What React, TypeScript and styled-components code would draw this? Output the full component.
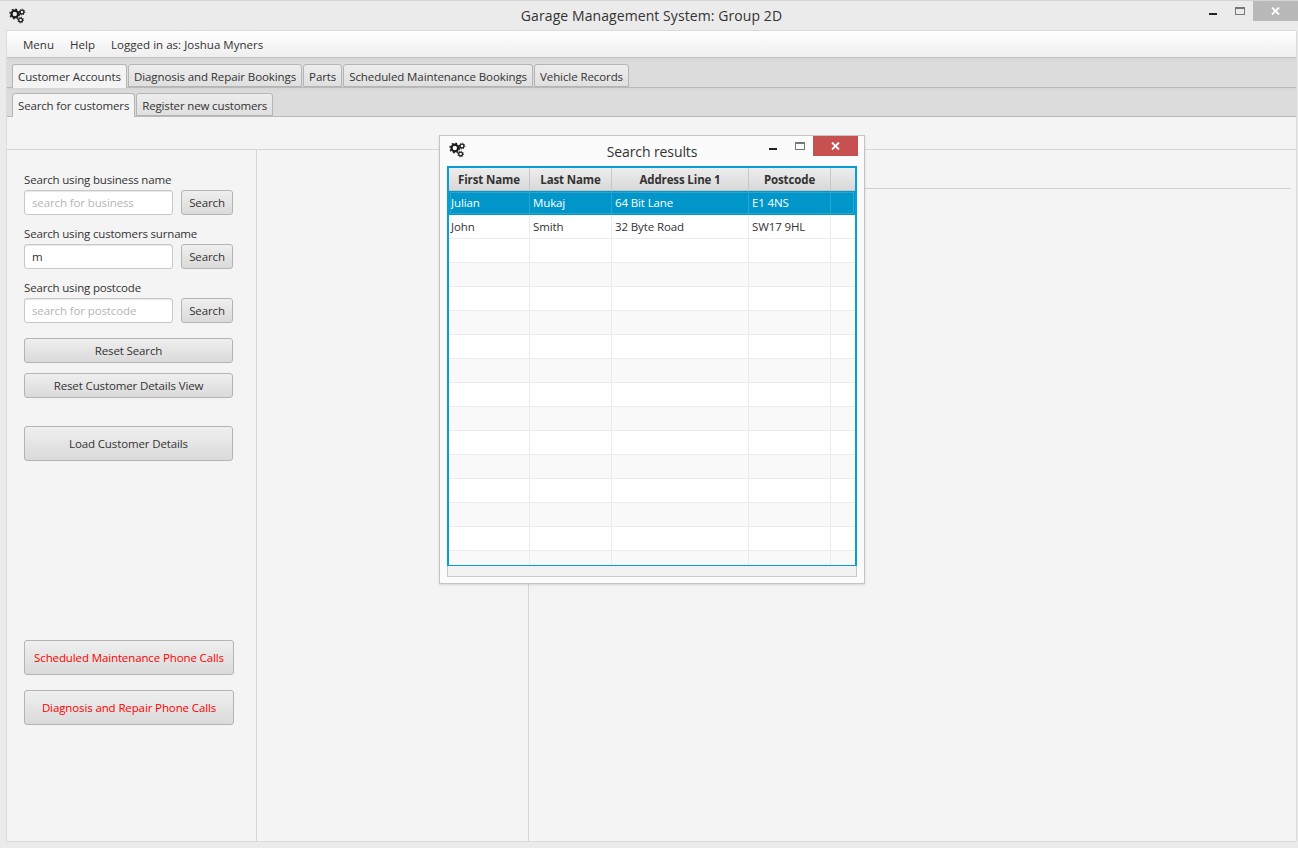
import React from "react";
import styled, { createGlobalStyle } from "styled-components";

const GlobalStyle = createGlobalStyle`
  html, body {
    margin: 0;
    padding: 0;
    background: #ebebeb;
  }
  * {
    box-sizing: border-box;
  }
`;

const FONT = `"Open Sans", "Noto Sans", sans-serif`;

const GearsIcon = () => (
  <svg width="17" height="16" viewBox="0 0 17 16" fill="none">
    <circle cx="5.8" cy="6" r="3.3" stroke="#1a1a1a" strokeWidth="2.2" />
    <circle cx="5.8" cy="6" r="4.8" stroke="#1a1a1a" strokeWidth="1.4" strokeDasharray="1.8 1.97" />
    <circle cx="13" cy="4" r="1.9" stroke="#1a1a1a" strokeWidth="1.3" />
    <circle cx="13" cy="4" r="2.9" stroke="#1a1a1a" strokeWidth="0.9" strokeDasharray="1.1 1.18" />
    <circle cx="11.6" cy="12" r="1.9" stroke="#1a1a1a" strokeWidth="1.3" />
    <circle cx="11.6" cy="12" r="2.9" stroke="#1a1a1a" strokeWidth="0.9" strokeDasharray="1.1 1.18" />
  </svg>
);

const MaximiseIcon = () => (
  <svg width="10" height="8" viewBox="0 0 10 8" fill="none">
    <rect x="0.5" y="0.5" width="9" height="7" stroke="#777" />
    <rect x="0" y="0" width="10" height="2" fill="#777" />
  </svg>
);

const CloseIcon = () => (
  <svg width="9" height="8" viewBox="0 0 9 8" fill="none">
    <path d="M1 0.5L8 7.5M8 0.5L1 7.5" stroke="#fff" strokeWidth="1.8" />
  </svg>
);

const Minimise = styled.span`
  display: block;
  width: 8px;
  height: 2px;
  background: #222;
`;

const WindowControls = ({ active }: { active?: boolean }) => (
  <Controls>
    <MinButton>
      <Minimise />
    </MinButton>
    <MaxButton>
      <MaximiseIcon />
    </MaxButton>
    <CloseButton $active={active}>
      <CloseIcon />
    </CloseButton>
  </Controls>
);

const columns = ["First Name", "Last Name", "Address Line 1", "Postcode", ""];
const customers = [
  ["Julian", "Mukaj", "64 Bit Lane", "E1 4NS", ""],
  ["John", "Smith", "32 Byte Road", "SW17 9HL", ""],
];
const emptyRows = Array.from({ length: 14 }, (_, i) => i);

const App = () => {
  return (
    <Page>
      <GlobalStyle />
      <TitleBar>
        <TitleIcon>
          <GearsIcon />
        </TitleIcon>
        <Title>Garage Management System: Group 2D</Title>
        <WindowControls />
      </TitleBar>
      <Frame>
        <MenuBar>
          <MenuItem>Menu</MenuItem>
          <MenuItem>Help</MenuItem>
          <MenuItem>Logged in as: Joshua Myners</MenuItem>
        </MenuBar>
        <TabStrip $main>
          <Tab $active>Customer Accounts</Tab>
          <Tab>Diagnosis and Repair Bookings</Tab>
          <Tab>Parts</Tab>
          <Tab>Scheduled Maintenance Bookings</Tab>
          <Tab>Vehicle Records</Tab>
        </TabStrip>
        <TabStrip>
          <Tab $active>Search for customers</Tab>
          <Tab>Register new customers</Tab>
        </TabStrip>
        <TopBand />
        <Columns>
          <SearchPanel>
            <SearchGroup>
              <FieldLabel>Search using business name</FieldLabel>
              <FieldRow>
                <TextField placeholder="search for business" readOnly />
                <SmallButton>Search</SmallButton>
              </FieldRow>
            </SearchGroup>
            <SearchGroup>
              <FieldLabel>Search using customers surname</FieldLabel>
              <FieldRow>
                <TextField value="m" readOnly />
                <SmallButton>Search</SmallButton>
              </FieldRow>
            </SearchGroup>
            <SearchGroup>
              <FieldLabel>Search using postcode</FieldLabel>
              <FieldRow>
                <TextField placeholder="search for postcode" readOnly />
                <SmallButton>Search</SmallButton>
              </FieldRow>
            </SearchGroup>
            <WideButton>Reset Search</WideButton>
            <WideButton>Reset Customer Details View</WideButton>
            <LoadButton>Load Customer Details</LoadButton>
            <PhoneButton>Scheduled Maintenance Phone Calls</PhoneButton>
            <PhoneButton>Diagnosis and Repair Phone Calls</PhoneButton>
          </SearchPanel>
          <MiddlePanel />
          <DetailPanel>
            <DetailRule />
          </DetailPanel>
        </Columns>
      </Frame>

      <Dialog>
        <DialogTitleBar>
          <DialogIcon>
            <GearsIcon />
          </DialogIcon>
          <DialogTitle>Search results</DialogTitle>
          <WindowControls active />
        </DialogTitleBar>
        <TableFrame>
          <HeaderRow>
            {columns.map((c, i) => (
              <HeaderCell key={i}>{c}</HeaderCell>
            ))}
          </HeaderRow>
          {customers.map((row, r) => (
            <Row key={r} $selected={r === 0}>
              {row.map((v, i) => (
                <Cell key={i} $selected={r === 0}>
                  {v}
                </Cell>
              ))}
            </Row>
          ))}
          {emptyRows.map((r) => (
            <Row key={r} $odd={r % 2 === 1}>
              {columns.map((_, i) => (
                <Cell key={i} />
              ))}
            </Row>
          ))}
        </TableFrame>
        <ScrollTrack />
      </Dialog>
    </Page>
  );
};

export default App;

const Page = styled.div`
  position: relative;
  width: 1298px;
  height: 848px;
  overflow: hidden;
  display: flex;
  flex-direction: column;
  background: #ebebeb;
  border-top: 1px solid #d4d4d4;
  font-family: ${FONT};
  font-size: 11.5px;
  letter-spacing: -0.12px;
  color: #333;
`;

const TitleBar = styled.div`
  position: relative;
  height: 29px;
  flex: none;
  display: flex;
  align-items: center;
  justify-content: center;
  padding-left: 5px;
`;

const TitleIcon = styled.div`
  position: absolute;
  left: 9px;
  top: 7px;
  display: flex;
`;

const Title = styled.div`
  font-size: 14px;
  letter-spacing: 0.08px;
  color: #333;
`;

const Controls = styled.div`
  position: absolute;
  top: 0;
  right: 0;
  display: flex;
  align-items: flex-start;
`;

const MinButton = styled.div`
  width: 28px;
  height: 20px;
  display: flex;
  align-items: flex-start;
  justify-content: center;
  padding-top: 12px;
`;

const MaxButton = styled.div`
  width: 26px;
  height: 20px;
  display: flex;
  justify-content: center;
  padding-top: 6px;
`;

const CloseButton = styled.div<{ $active?: boolean }>`
  width: 45px;
  height: 20px;
  display: flex;
  align-items: center;
  justify-content: center;
  background: ${(p) => (p.$active ? "#c75050" : "#b9b9b9")};
`;

const Frame = styled.div`
  flex: 1;
  margin: 0 1px 6px 6px;
  display: flex;
  flex-direction: column;
  border: 1px solid #dcdcdc;
  border-top: 0;
  background: #f4f4f4;
  min-height: 0;
`;

const MenuBar = styled.div`
  height: 28px;
  flex: none;
  display: flex;
  align-items: center;
  padding-left: 8px;
  letter-spacing: 0.03px;
  border-top: 1px solid #dadada;
  border-bottom: 1px solid #c4c4c4;
  background: linear-gradient(#ffffff, #efefef);
`;

const MenuItem = styled.div`
  padding: 0 8px;
  color: #333;
`;

const TabStrip = styled.div<{ $main?: boolean }>`
  height: ${(p) => (p.$main ? "30px" : "29px")};
  flex: none;
  display: flex;
  align-items: flex-end;
  gap: 1px;
  padding-left: 5px;
  letter-spacing: ${(p) => (p.$main ? "-0.09px" : "-0.15px")};
  background: linear-gradient(#d6d6d6 0, #dcdcdc 4px);
  border-bottom: 1px solid #b9b9b9;
`;

const Tab = styled.div<{ $active?: boolean }>`
  height: ${(p) => (p.$active ? "24px" : "23px")};
  margin-bottom: ${(p) => (p.$active ? "-1px" : "0")};
  padding: ${(p) => (p.$active ? "0 5px" : "1px 5px 0")};
  display: flex;
  align-items: center;
  border: 1px solid #b5b5b5;
  border-bottom: ${(p) => (p.$active ? "0" : "1px solid #b5b5b5")};
  border-radius: 3px 3px 0 0;
  background: ${(p) => (p.$active ? "#f4f4f4" : "linear-gradient(#ededed, #dfdfdf)")};
  color: #333;
  white-space: nowrap;
`;

const TopBand = styled.div`
  height: 33px;
  flex: none;
  border-bottom: 1px solid #d6d6d6;
`;

const Columns = styled.div`
  flex: 1;
  display: flex;
  min-height: 0;
`;

const SearchPanel = styled.div`
  width: 250px;
  flex: none;
  display: flex;
  flex-direction: column;
  padding: 21px 0 0 17px;
  border-right: 1px solid #d6d6d6;
`;

const SearchGroup = styled.div`
  display: flex;
  flex-direction: column;
  margin-bottom: 10px;
`;

const FieldLabel = styled.div`
  height: 17px;
  line-height: 17px;
  letter-spacing: -0.17px;
  color: #333;
  white-space: nowrap;
`;

const FieldRow = styled.div`
  display: flex;
  gap: 8px;
  margin-top: 2px;
`;

const TextField = styled.input`
  width: 149px;
  height: 25px;
  padding: 0 7px;
  border: 1px solid #c8c8c8;
  border-radius: 3px;
  background: #fff;
  box-shadow: inset 0 1px 1px #e6e6e6;
  font-family: ${FONT};
  font-size: 11.5px;
  letter-spacing: -0.12px;
  color: #333;
  outline: none;

  &::placeholder {
    color: #b5b5b5;
    opacity: 1;
  }
`;

const PushButton = styled.button`
  display: flex;
  align-items: center;
  justify-content: center;
  padding: 0;
  border: 1px solid #b4b4b4;
  border-radius: 3px;
  background: linear-gradient(#efefef, #dadada);
  font-family: ${FONT};
  font-size: 11.5px;
  letter-spacing: -0.12px;
  color: #333;
  white-space: nowrap;
`;

const SmallButton = styled(PushButton)`
  width: 52px;
  height: 25px;
`;

const WideButton = styled(PushButton)`
  width: 209px;
  height: 25px;
  margin-top: 10px;

  ${SearchGroup} + & {
    margin-top: 5px;
  }
`;

const LoadButton = styled(PushButton)`
  width: 209px;
  height: 35px;
  margin-top: 28px;
`;

const PhoneButton = styled(PushButton)`
  width: 210px;
  height: 35px;
  margin-top: 15px;
  color: #ff0000;

  ${LoadButton} + & {
    margin-top: 179px;
  }
`;

const MiddlePanel = styled.div`
  width: 272px;
  flex: none;
  border-right: 1px solid #d6d6d6;
`;

const DetailPanel = styled.div`
  flex: 1;
  padding: 38px 5px 0 0;
`;

const DetailRule = styled.div`
  height: 1px;
  background: #d0d0d0;
`;

const Dialog = styled.div`
  position: absolute;
  left: 439px;
  top: 134px;
  width: 426px;
  height: 449px;
  display: flex;
  flex-direction: column;
  padding: 0 7px;
  background: #fbfbfb;
  border: 1px solid #c4c4c4;
  box-shadow: 0 1px 2px rgba(0, 0, 0, 0.12);
`;

const DialogTitleBar = styled.div`
  position: relative;
  height: 30px;
  flex: none;
  display: flex;
  align-items: center;
  justify-content: center;
  margin: 0 -7px;

  ${Controls} {
    right: 6px;
  }
`;

const DialogIcon = styled.div`
  position: absolute;
  left: 9px;
  top: 6px;
  display: flex;
`;

const DialogTitle = styled.div`
  font-size: 14px;
  letter-spacing: -0.1px;
  color: #333;
`;

const TableFrame = styled.div`
  height: 400px;
  flex: none;
  overflow: hidden;
  border: 2px solid #0a9fd4;
  border-bottom-width: 1px;
  box-shadow: 0 1px 1px #a9def0;
  background: #fff;
`;

const tableColumns = "81px 82px 137px 82px 1fr";

const HeaderRow = styled.div`
  height: 23px;
  display: grid;
  grid-template-columns: ${tableColumns};
  border-bottom: 1px solid #c4c4c4;
`;

const HeaderCell = styled.div`
  display: flex;
  align-items: center;
  justify-content: center;
  border-right: 1px solid #c8c8c8;
  background: linear-gradient(#ededed, #d9d9d9);
  font-weight: 700;
  color: #333;
  white-space: nowrap;

  &:last-child {
    border-right: 0;
  }
`;

const Row = styled.div<{ $selected?: boolean; $odd?: boolean }>`
  height: 24px;
  display: grid;
  grid-template-columns: ${tableColumns};
  background: ${(p) => (p.$selected ? "#0096c9" : p.$odd ? "#f9f9f9" : "#ffffff")};
  outline: ${(p) => (p.$selected ? "1px solid #2aa5d0" : "none")};
  outline-offset: -2px;
`;

const Cell = styled.div<{ $selected?: boolean }>`
  display: flex;
  align-items: center;
  padding-left: 2px;
  border-right: 1px solid ${(p) => (p.$selected ? "#2aa5d0" : "#ececec")};
  border-bottom: 1px solid ${(p) => (p.$selected ? "#0096c9" : "#ececec")};
  color: ${(p) => (p.$selected ? "#ffffff" : "#333")};
  white-space: nowrap;

  &:last-child {
    border-right: 0;
  }

  & + & {
    padding-left: 3px;
  }
`;

const ScrollTrack = styled.div`
  height: 11px;
  flex: none;
  background: #f2f2f2;
  border: 1px solid #c8c8c8;
  border-top: 0;
`;
